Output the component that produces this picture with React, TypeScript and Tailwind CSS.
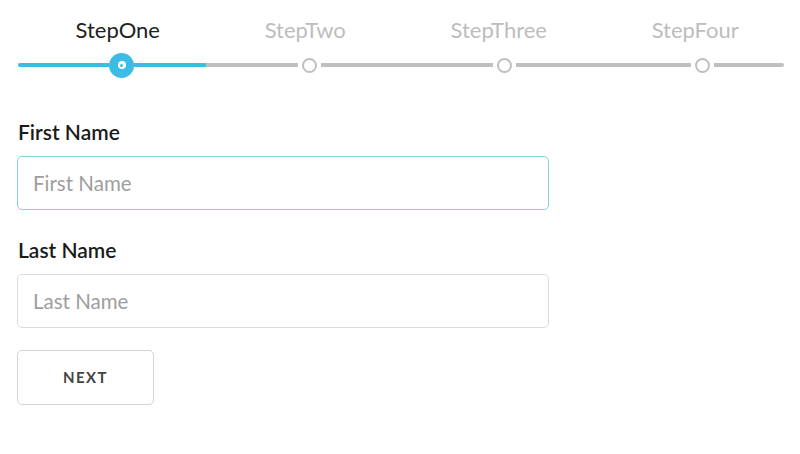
import React from "react";

const steps = [
  { label: "StepOne", labelCls: "pl-[8px]", leftCls: "grow basis-[20px]" },
  { label: "StepTwo", labelCls: "pl-0", leftCls: "grow basis-[12px]" },
  { label: "StepThree", labelCls: "pl-[4px]", leftCls: "grow basis-[16px]" },
  { label: "StepFour", labelCls: "pl-[14px]", leftCls: "grow basis-[28px]" },
];

function Step({ index }: { index: number }) {
  const s = steps[index];
  const active = index === 0;
  return (
    <div className="flex flex-col items-center">
      <div
        className={
          (active ? "text-[#222] " : "text-[#bdbdbd] ") +
          "h-[52px] pt-[17px] text-[22px] leading-[26px] " +
          s.labelCls
        }
      >
        {s.label}
      </div>
      <div className="flex h-[26px] w-full items-center">
        {active ? (
          <>
            <div className={"h-[4px] rounded-l-full bg-[#3bbce6] " + s.leftCls} />
            <div className="flex h-[25px] w-[25px] items-center justify-center rounded-full bg-[#3bbce6]">
              <div className="flex h-[8px] w-[8px] items-center justify-center rounded-full bg-white">
                <div className="h-[3px] w-[3px] rounded-full bg-[#3bbce6]" />
              </div>
            </div>
            <div className="mr-[4px] h-[4px] grow basis-0 bg-[#3bbce6]" />
          </>
        ) : (
          <>
            <div
              className={
                index === 1
                  ? "-ml-[4px] h-[4px] bg-[#bfbfbf] " + s.leftCls
                  : "h-[4px] bg-[#bfbfbf] " + s.leftCls
              }
            />
            <div className="mx-[4px] h-[15px] w-[15px] rounded-full border-[2.5px] border-[#bfbfbf]" />
            <div
              className={
                index === 3
                  ? "h-[4px] grow basis-0 rounded-r-full bg-[#bfbfbf]"
                  : "h-[4px] grow basis-0 bg-[#bfbfbf]"
              }
            />
          </>
        )}
      </div>
    </div>
  );
}

export default function App() {
  return (
    <div
      className="h-[454px] w-[800px] bg-white"
      style={{ fontFamily: "Lato, 'Open Sans', sans-serif" }}
    >
      <div className="ml-[18px] grid w-[766px] grid-cols-4">
        {steps.map((s, i) => (
          <Step key={s.label} index={i} />
        ))}
      </div>
      <div className="ml-[17px] mt-[42px] flex w-[532px] flex-col">
        <label className="pl-[1px] text-[21px] font-semibold leading-[24px] text-[#1a1a1a]">
          First Name
        </label>
        <input
          placeholder="First Name"
          className="mt-[12px] h-[54px] w-full rounded-[5px] border-[1.5px] border-[#86d0e2] bg-white px-[15px] text-[20.5px] text-[#333] outline-none placeholder:text-[#9e9e9e]"
        />
        <label className="mt-[28px] pl-[1px] text-[21px] font-semibold leading-[24px] text-[#1a1a1a]">
          Last Name
        </label>
        <input
          placeholder="Last Name"
          className="mt-[12px] h-[54px] w-full rounded-[5px] border-[1.5px] border-[#dcdcdc] bg-white px-[15px] text-[20.5px] text-[#333] outline-none placeholder:text-[#9e9e9e]"
        />
        <button className="mt-[22px] h-[55px] w-[137px] rounded-[5px] border-[1.5px] border-[#d4d4d4] bg-white text-[15px] font-bold tracking-[1.5px] text-[#444]">
          NEXT
        </button>
      </div>
    </div>
  );
}
